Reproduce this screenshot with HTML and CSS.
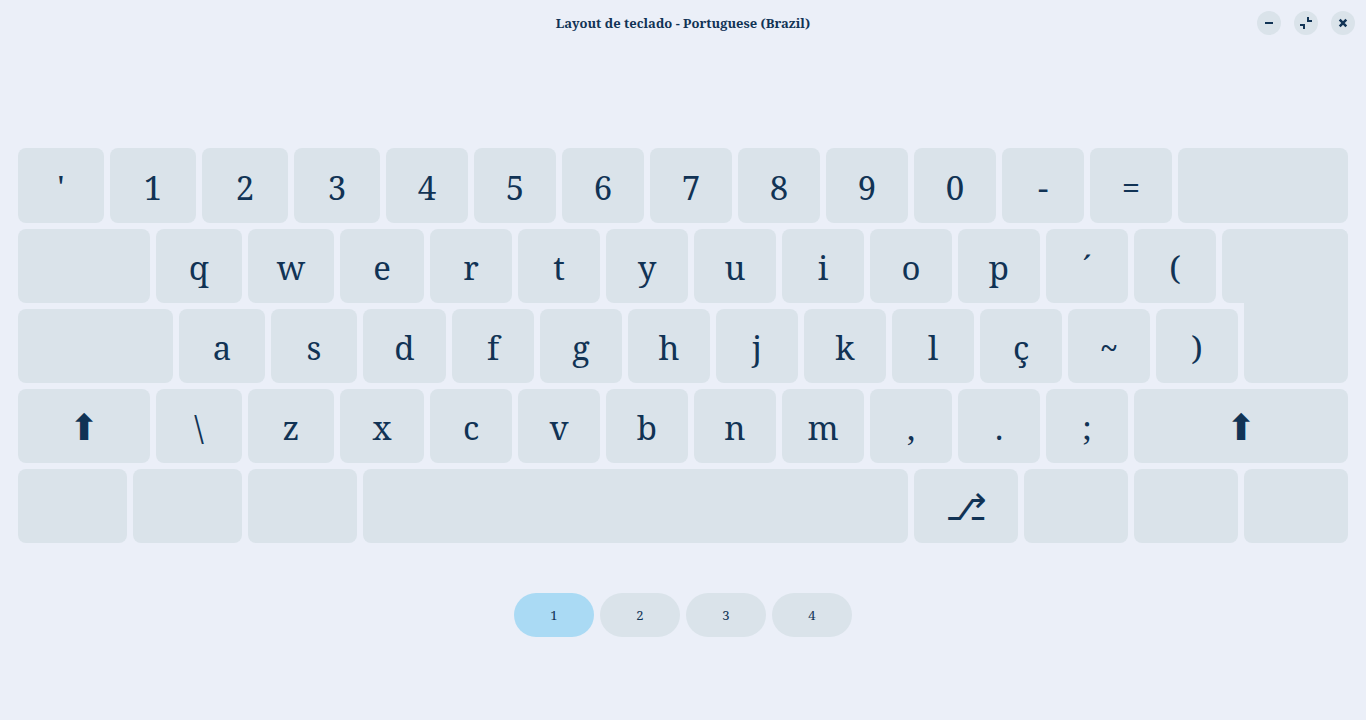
FILE: index.html
```html
<!DOCTYPE html>
<html lang="pt-BR">
<head>
    <meta charset="UTF-8">
    <meta name="viewport" content="width=device-width, initial-scale=1.0">
    <title>Layout de teclado - Portuguese (Brazil)</title>
    <link rel="stylesheet" href="styles.css">
</head>
<body>
    <header class="titlebar">
        <h1 class="title">Layout de teclado - Portuguese (Brazil)</h1>
        <div class="controls">
            <button class="control" type="button" aria-label="Minimizar">
                <svg width="24" height="24" viewBox="0 0 24 24"><path d="M8 11h8v2H8z"/></svg>
            </button>
            <button class="control" type="button" aria-label="Restaurar">
                <svg width="24" height="24" viewBox="0 0 24 24"><path d="M13 6h2v3h3v2h-5zM6 13h5v5H9v-3H6z"/></svg>
            </button>
            <button class="control" type="button" aria-label="Fechar">
                <svg width="24" height="24" viewBox="0 0 24 24"><path class="line" d="M8.7 8.7l6.6 6.6M15.3 8.7l-6.6 6.6"/></svg>
            </button>
        </div>
    </header>

    <main class="keyboard">
        <div class="key">'</div>
        <div class="key">1</div>
        <div class="key">2</div>
        <div class="key">3</div>
        <div class="key">4</div>
        <div class="key">5</div>
        <div class="key">6</div>
        <div class="key">7</div>
        <div class="key">8</div>
        <div class="key">9</div>
        <div class="key">0</div>
        <div class="key">-</div>
        <div class="key">=</div>
        <div class="key backspace"></div>

        <div class="key tab"></div>
        <div class="key">q</div>
        <div class="key">w</div>
        <div class="key">e</div>
        <div class="key">r</div>
        <div class="key">t</div>
        <div class="key">y</div>
        <div class="key">u</div>
        <div class="key">i</div>
        <div class="key">o</div>
        <div class="key">p</div>
        <div class="key">´</div>
        <div class="key">(</div>
        <div class="key enter-top"></div>
        <div class="key enter-bottom"></div>

        <div class="key caps"></div>
        <div class="key">a</div>
        <div class="key">s</div>
        <div class="key">d</div>
        <div class="key">f</div>
        <div class="key">g</div>
        <div class="key">h</div>
        <div class="key">j</div>
        <div class="key">k</div>
        <div class="key">l</div>
        <div class="key">ç</div>
        <div class="key">~</div>
        <div class="key">)</div>

        <div class="key tab symbol">⬆</div>
        <div class="key">\</div>
        <div class="key">z</div>
        <div class="key">x</div>
        <div class="key">c</div>
        <div class="key">v</div>
        <div class="key">b</div>
        <div class="key">n</div>
        <div class="key">m</div>
        <div class="key">,</div>
        <div class="key">.</div>
        <div class="key">;</div>
        <div class="key shift-right symbol">⬆</div>

        <div class="key modifier"></div>
        <div class="key modifier"></div>
        <div class="key modifier"></div>
        <div class="key space"></div>
        <div class="key modifier symbol">⎇</div>
        <div class="key modifier"></div>
        <div class="key modifier"></div>
        <div class="key modifier"></div>
    </main>

    <nav class="levels" aria-label="Níveis">
        <button class="level active" type="button">1</button>
        <button class="level" type="button">2</button>
        <button class="level" type="button">3</button>
        <button class="level" type="button">4</button>
    </nav>
</body>
</html>
```
FILE: styles.css
```css
* {
    box-sizing: border-box;
}
body {
    margin: 0;
    min-height: 100vh;
    display: flex;
    flex-direction: column;
    background-color: #ebeff8;
    color: #113355;
    font-family: "Noto Serif", "Droid Serif", "DejaVu Serif", serif;
}
.titlebar {
    display: grid;
    grid-template-columns: 1fr auto 1fr;
    align-items: center;
    height: 46px;
    padding: 0 11px;
}
.title {
    grid-column: 2;
    margin: 0;
    font-size: 13px;
    font-weight: bold;
}
.controls {
    display: flex;
    justify-content: flex-end;
    gap: 13px;
}
.control {
    width: 24px;
    height: 24px;
    padding: 0;
    border: none;
    border-radius: 50%;
    background-color: #dae3ea;
}
.control svg {
    display: block;
    fill: #113355;
}
.control .line {
    fill: none;
    stroke: #113355;
    stroke-width: 2.5;
}
.keyboard {
    display: grid;
    /* a quarter of a key per column, the first 16 slightly wider */
    grid-template-columns: repeat(16, minmax(0, 17fr)) repeat(44, minmax(0, 16fr));
    grid-template-rows: 75px;
    grid-auto-rows: 74px;
    gap: 6px;
    margin: auto 18px 0;
    padding-top: 19px;
}
.key {
    grid-column: span 4;
    display: flex;
    align-items: center;
    justify-content: center;
    padding-top: 4px;
    border-radius: 8px;
    background-color: #dae3ea;
    font-size: 33px;
    line-height: 46px;
}
.symbol {
    font-family: "DejaVu Sans", sans-serif;
    font-size: 36px;
}
.backspace { grid-column: span 8; }
.tab { grid-column: span 6; }
.caps { grid-column: span 7; }
.modifier { grid-column: span 5; }
.shift-right { grid-column: span 10; }
.space { grid-column: span 25; }
.enter-top {
    grid-area: 2 / 55 / 3 / 61;
    border-bottom-right-radius: 0;
}
.enter-bottom {
    grid-area: 2 / 56 / 4 / 61;
    border-top-left-radius: 0;
}
.levels {
    display: flex;
    justify-content: center;
    gap: 6px;
    margin: 50px 0 auto;
}
.level {
    width: 80px;
    height: 44px;
    padding: 0;
    border: none;
    border-radius: 22px;
    background-color: #dae3ea;
    color: #113355;
    font-family: inherit;
    font-size: 13px;
}
.level.active { background-color: #aadaf4; }
```
